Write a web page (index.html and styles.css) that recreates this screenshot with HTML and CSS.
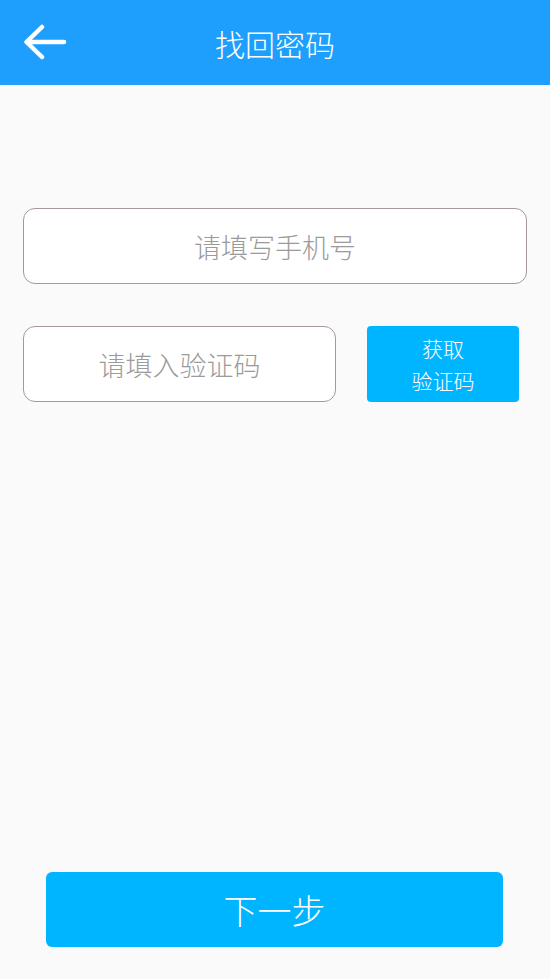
FILE: index.html
```html
<!DOCTYPE html>
<html lang="zh-CN">
<head>
  <meta charset="UTF-8">
  <title>找回密码</title>
  <link rel="stylesheet" href="styles.css">
</head>
<body>
  <div class="page">
    <header class="topbar">
      <a class="back" href="#">
        <svg width="44" height="40" viewBox="0 0 44 40">
          <path d="M41 18 H4 M19 3 L3.5 18 L19 33" fill="none" stroke="#fff" stroke-width="4.5" stroke-linecap="round" stroke-linejoin="round"/>
        </svg>
      </a>
      <h1 class="title">找回密码</h1>
    </header>

    <form class="form" id="resetForm">
      <input class="field" type="tel" id="phone" placeholder="请填写手机号">

      <div class="code-row">
        <input class="field code-field" type="text" id="code" placeholder="请填入验证码">
        <button class="code-btn" type="button">获取<br>验证码</button>
      </div>
    </form>

    <div class="footer">
      <button class="next-btn" type="submit" form="resetForm">下一步</button>
    </div>
  </div>
</body>
</html>
```

FILE: styles.css
```css
* {
  box-sizing: border-box;
}

body {
  margin: 0;
  background: #fafafa;
  font-family: "Noto Sans CJK SC", "Noto Sans", sans-serif;
  font-weight: 300;
}

.page {
  display: flex;
  flex-direction: column;
  min-height: 100vh;
}

.topbar {
  position: relative;
  height: 85px;
  background: #1e9ffd;
  display: flex;
  align-items: center;
  justify-content: center;
}

.back {
  position: absolute;
  left: 23px;
  top: 24px;
  display: block;
  height: 40px;
}

.title {
  margin: 0;
  color: #fff;
  font-size: 30px;
  font-weight: 300;
  line-height: 1;
}

.form {
  padding: 123px 23px 0;
  display: flex;
  flex-direction: column;
  gap: 42px;
}

.field {
  display: block;
  width: 100%;
  height: 76px;
  border: 1px solid #a59898;
  border-radius: 12px;
  background: #fff;
  font-family: inherit;
  font-weight: 300;
  font-size: 27px;
  text-align: center;
  color: #333;
  outline: none;
}

.field::placeholder {
  color: #9b9b9b;
}

.code-row {
  display: flex;
  align-items: center;
  gap: 31px;
  padding-right: 8px;
}

.code-field {
  width: 313px;
  flex: none;
}

.code-btn {
  width: 152px;
  height: 76px;
  border: none;
  border-radius: 4px;
  background: #00b5ff;
  color: #fff;
  font-family: inherit;
  font-weight: 300;
  font-size: 21px;
  line-height: 32px;
  padding: 0;
}

.footer {
  margin-top: auto;
  padding: 0 47px 32px 46px;
}

.next-btn {
  display: block;
  width: 100%;
  height: 75px;
  border: none;
  border-radius: 6px;
  background: #00b5ff;
  color: #fff;
  font-family: inherit;
  font-weight: 300;
  font-size: 34px;
}
```
